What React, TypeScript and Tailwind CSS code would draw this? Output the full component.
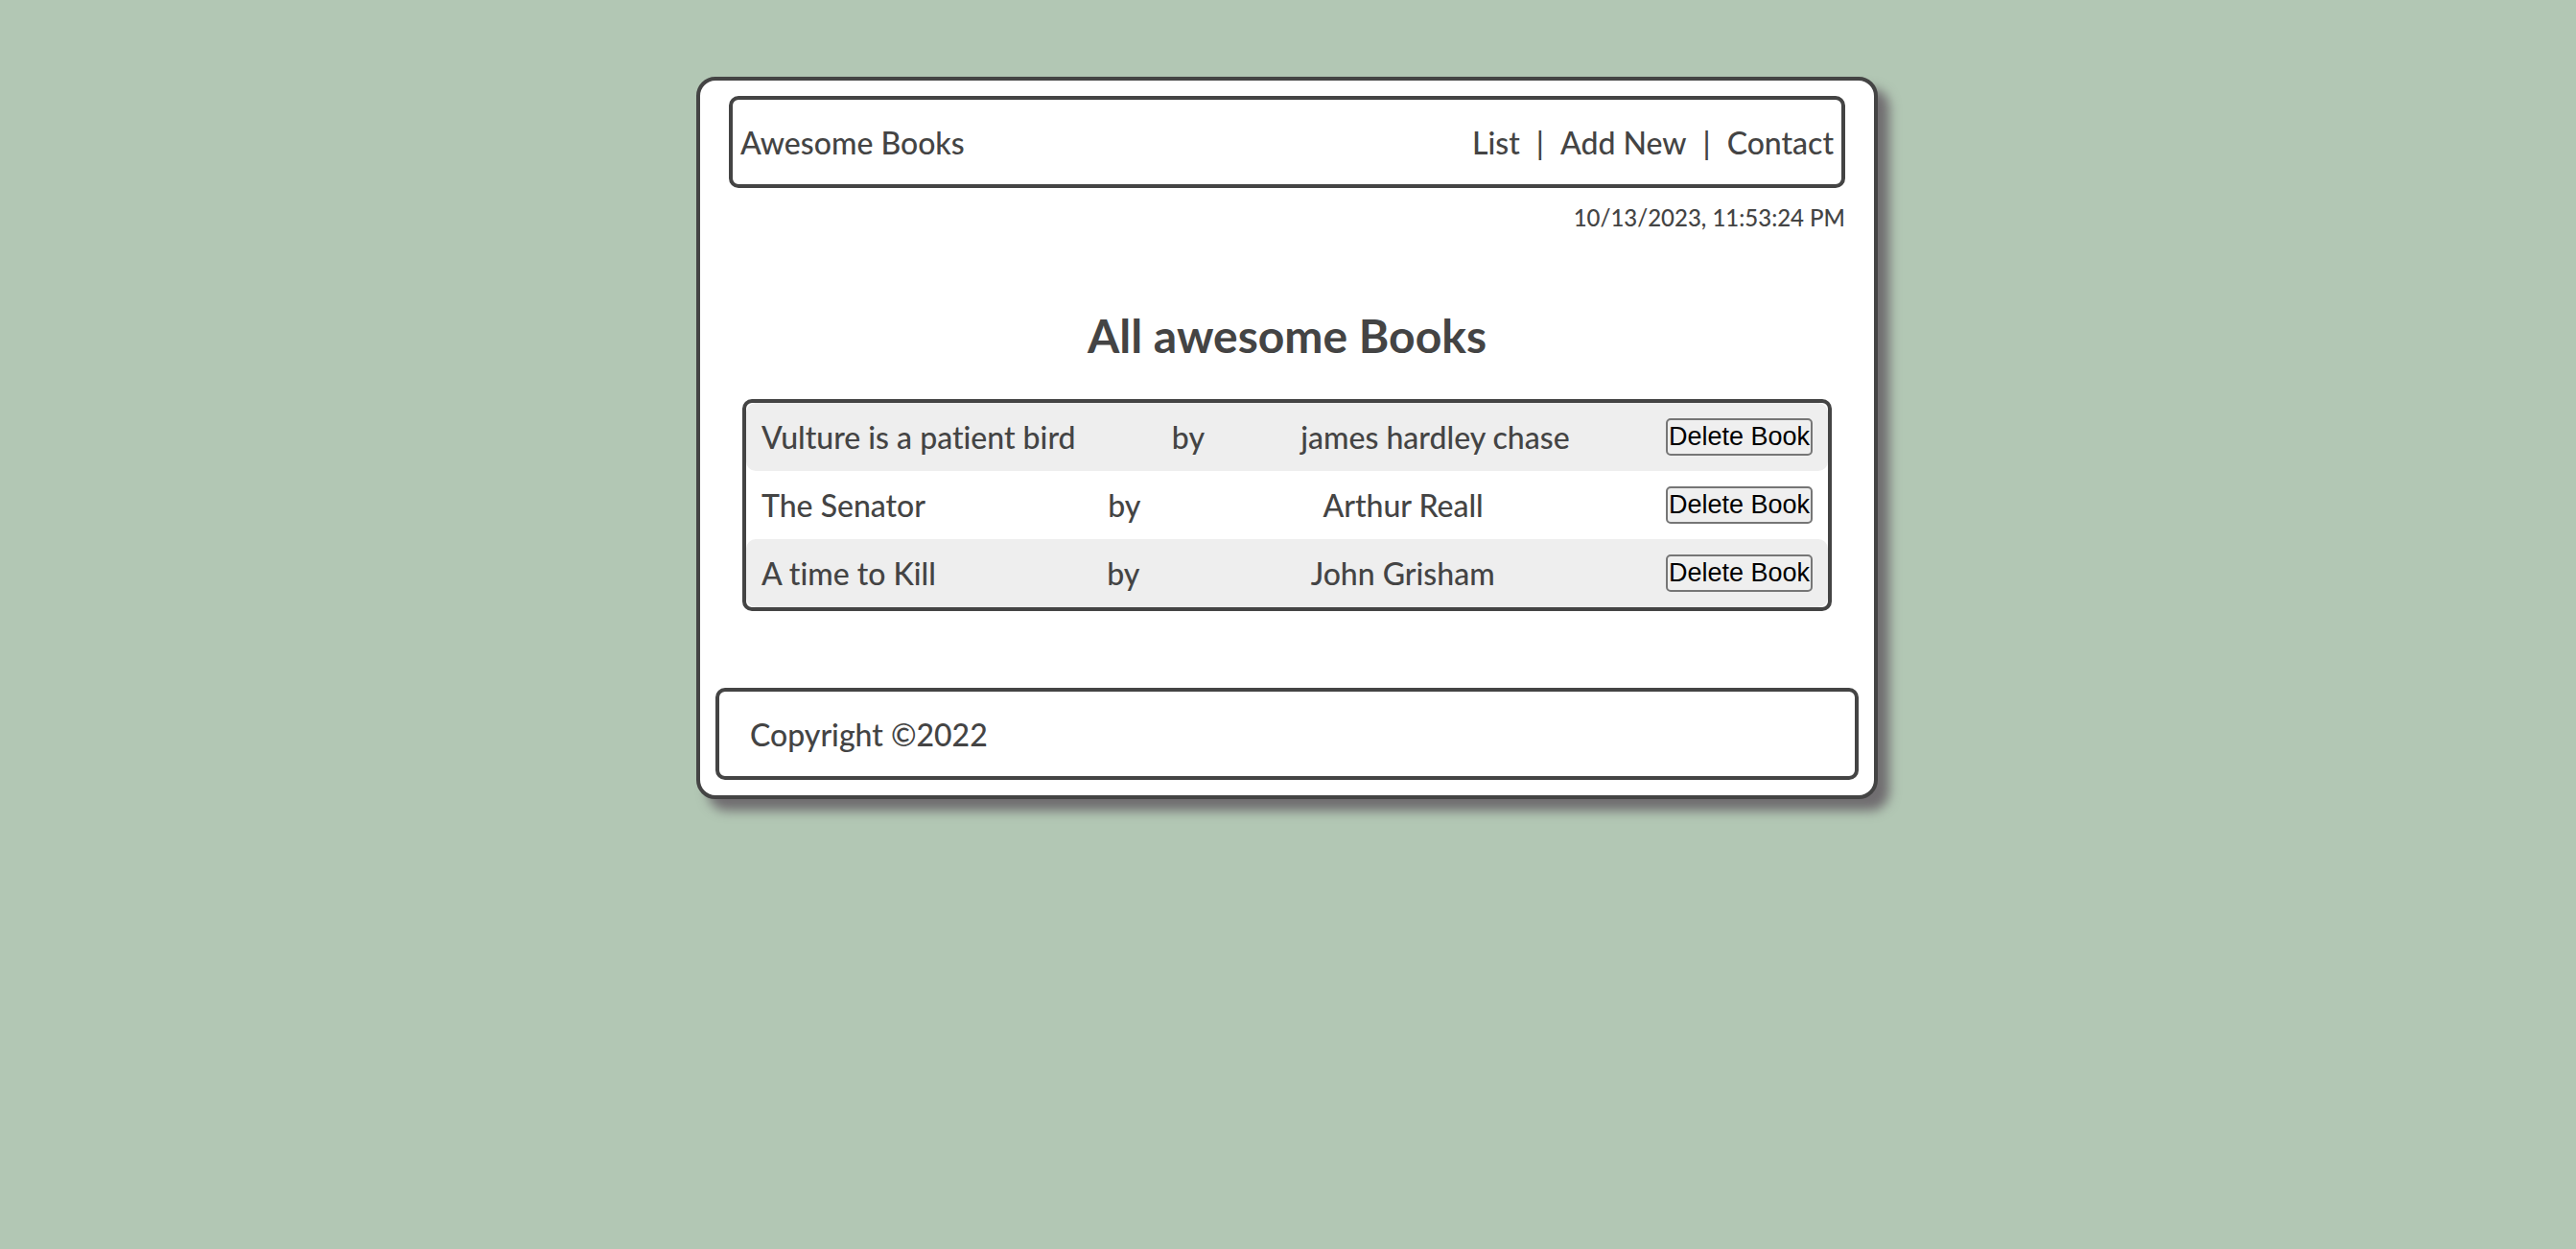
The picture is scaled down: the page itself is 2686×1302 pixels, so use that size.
const books = [
  { title: 'Vulture is a patient bird', author: 'james hardley chase' },
  { title: 'The Senator', author: 'Arthur Reall' },
  { title: 'A time to Kill', author: 'John Grisham' },
];

const links = ['List', 'Add New', 'Contact'];

export default function App() {
  return (
    <div className="min-h-screen bg-[#b2c7b4] pt-20 pr-0.5 font-[Lato,sans-serif] text-[32px] leading-[39px] font-medium text-[#444444] [font-variant-ligatures:none]">
      <div className="mx-auto w-full max-w-[1232px] rounded-[20px] border-4 border-[#444444] bg-white p-4 shadow-[12px_12px_12px_#706d70]">
        <header className="mx-3.5 flex items-center justify-between rounded-[10px] border-4 border-[#444444] px-2 pt-[25px] pb-6">
          <a href="#home">Awesome Books</a>
          <nav>
            <ul className="flex">
              {links.map((link, i) => (
                <li key={link} className="flex">
                  {i > 0 && <span className="px-[17px]">|</span>}
                  <a href={'#' + link}>{link}</a>
                </li>
              ))}
            </ul>
          </nav>
        </header>
        <p className="mx-3.5 mt-4 text-right text-[24px] leading-[30px]">10/13/2023, 11:53:24 PM</p>
        <main className="mx-7 mt-[78px]">
          <h1 className="text-center text-[48px] leading-[60px] font-bold">All awesome Books</h1>
          <ul className="mt-9 rounded-[10px] border-4 border-[#444444]">
            {books.map((book) => (
              <li key={book.title} className="flex items-center justify-between rounded-[10px] p-4 odd:bg-[#eeeeee]">
                <span>{book.title}</span>
                <span>by</span>
                <span>{book.author}</span>
                <button
                  type="button"
                  className="h-[39px] rounded-[5px] border-2 border-[#767676] bg-[#efefef] px-px font-['Liberation_Sans',sans-serif] text-[27px] leading-[31px] font-normal text-black"
                >
                  Delete Book
                </button>
              </li>
            ))}
          </ul>
        </main>
        <footer className="mt-20 rounded-[10px] border-4 border-[#444444] px-8 pt-[25px] pb-6">
          <p>Copyright ©2022</p>
        </footer>
      </div>
    </div>
  );
}
